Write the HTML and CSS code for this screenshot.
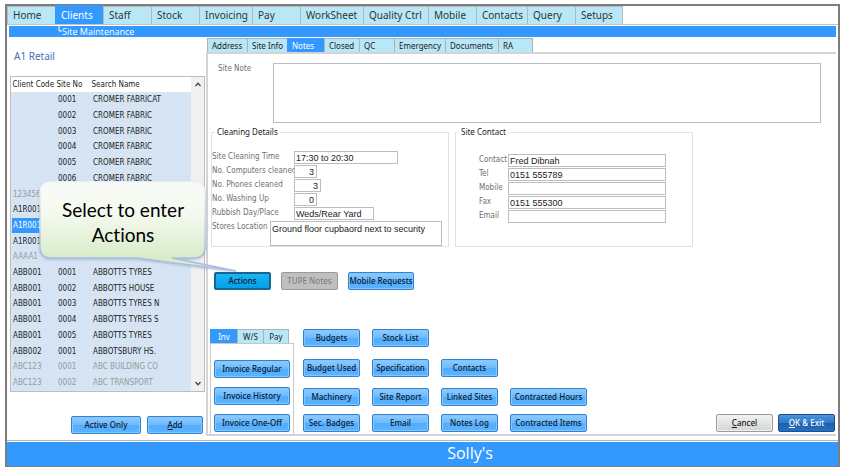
FILE: index.html
```html
<!DOCTYPE html>
<html lang="en">
<head>
    <meta charset="UTF-8">
    <meta name="viewport" content="width=device-width, initial-scale=1.0">
    <title>Site Maintenance</title>
    <link rel="stylesheet" href="styles.css">
</head>
<body>

    <div class="window">
        <nav class="main-nav">
            <a href="#" class="w48">Home</a>
            <a href="#" class="w48 active">Clients</a>
            <a href="#" class="w48">Staff</a>
            <a href="#" class="w48">Stock</a>
            <a href="#" class="w53">Invoicing</a>
            <a href="#" class="w48">Pay</a>
            <a href="#" class="w63">WorkSheet</a>
            <a href="#" class="w65">Quality Ctrl</a>
            <a href="#" class="w48">Mobile</a>
            <a href="#" class="w51">Contacts</a>
            <a href="#" class="w48">Query</a>
            <a href="#" class="w48">Setups</a>
        </nav>
        <div class="sub-nav">
            <a href="#"><svg width="4" height="6" viewBox="0 0 4 6"><path d="M1 0v5h3" fill="none" stroke="#fff"/></svg>Site Maintenance</a>
        </div>

        <div class="content">
            <aside class="clients">
                <h1>A1 Retail</h1>
                <div class="client-list">
                    <table>
                        <thead>
                            <tr><th class="code">Client Code</th><th class="site">Site No</th><th>Search Name</th></tr>
                        </thead>
                        <tbody>
                            <tr><td></td><td>0001</td><td>CROMER FABRICAT</td></tr>
                            <tr><td></td><td>0002</td><td>CROMER FABRIC</td></tr>
                            <tr><td></td><td>0003</td><td>CROMER FABRIC</td></tr>
                            <tr><td></td><td>0004</td><td>CROMER FABRIC</td></tr>
                            <tr><td></td><td>0005</td><td>CROMER FABRIC</td></tr>
                            <tr><td></td><td>0006</td><td>CROMER FABRIC</td></tr>
                            <tr class="closed"><td>1234567</td><td></td><td></td></tr>
                            <tr><td>A1R001</td><td></td><td></td></tr>
                            <tr class="selected"><td>A1R001</td><td></td><td></td></tr>
                            <tr><td>A1R001</td><td></td><td></td></tr>
                            <tr class="closed"><td>AAAA1</td><td></td><td></td></tr>
                            <tr><td>ABB001</td><td>0001</td><td>ABBOTTS TYRES</td></tr>
                            <tr><td>ABB001</td><td>0002</td><td>ABBOTTS HOUSE</td></tr>
                            <tr><td>ABB001</td><td>0003</td><td>ABBOTTS TYRES N</td></tr>
                            <tr><td>ABB001</td><td>0004</td><td>ABBOTTS TYRES S</td></tr>
                            <tr><td>ABB001</td><td>0005</td><td>ABBOTTS TYRES</td></tr>
                            <tr><td>ABB002</td><td>0001</td><td>ABBOTSBURY HS.</td></tr>
                            <tr class="closed"><td>ABC123</td><td>0001</td><td>ABC BUILDING CO</td></tr>
                            <tr class="closed"><td>ABC123</td><td>0002</td><td>ABC TRANSPORT</td></tr>
                        </tbody>
                    </table>
                    <div class="scrollbar">
                        <svg width="6" height="5" viewBox="0 0 6 5"><path d="M0.5 4L3 1.3L5.5 4" fill="none" stroke="#444" stroke-width="1.3"/></svg>
                        <svg width="6" height="5" viewBox="0 0 6 5"><path d="M0.5 1L3 3.7L5.5 1" fill="none" stroke="#444" stroke-width="1.3"/></svg>
                    </div>
                </div>
                <div class="client-actions">
                    <button type="button" class="btn active-only">Active Only</button>
                    <button type="button" class="btn"><u>A</u>dd</button>
                </div>
            </aside>

            <main>
                <div class="tabs">
                    <button type="button" class="w40">Address</button>
                    <button type="button" class="w40">Site Info</button>
                    <button type="button" class="w37 active">Notes</button>
                    <button type="button" class="w35">Closed</button>
                    <button type="button" class="w35">QC</button>
                    <button type="button" class="w51">Emergency</button>
                    <button type="button" class="w53">Documents</button>
                    <button type="button" class="w35">RA</button>
                </div>

                <div class="panel">
                    <div class="site-note">
                        <label for="siteNote">Site Note</label>
                        <textarea id="siteNote"></textarea>
                    </div>

                    <div class="groups">
                        <fieldset class="cleaning">
                            <legend>Cleaning Details</legend>
                            <div class="row">
                                <label for="cleaningTime">Site Cleaning Time</label>
                                <input type="text" id="cleaningTime" class="time" value="17:30 to 20:30">
                            </div>
                            <div class="row">
                                <label for="computers">No. Computers cleaned</label>
                                <input type="text" id="computers" class="number" value="3">
                            </div>
                            <div class="row">
                                <label for="phones">No. Phones cleaned</label>
                                <input type="text" id="phones" class="number wide" value="3">
                            </div>
                            <div class="row">
                                <label for="washing">No. Washing Up</label>
                                <input type="text" id="washing" class="number" value="0">
                            </div>
                            <div class="row">
                                <label for="rubbish">Rubbish Day/Place</label>
                                <input type="text" id="rubbish" class="place" value="Weds/Rear Yard">
                            </div>
                            <div class="row stores">
                                <label for="stores">Stores Location</label>
                                <textarea id="stores">Ground floor cupbaord next to security</textarea>
                            </div>
                        </fieldset>

                        <fieldset class="contact">
                            <legend>Site Contact</legend>
                            <div class="row">
                                <label for="contact">Contact</label>
                                <input type="text" id="contact" value="Fred Dibnah">
                            </div>
                            <div class="row">
                                <label for="tel">Tel</label>
                                <input type="text" id="tel" value="0151 555789">
                            </div>
                            <div class="row">
                                <label for="mobile">Mobile</label>
                                <input type="text" id="mobile">
                            </div>
                            <div class="row">
                                <label for="fax">Fax</label>
                                <input type="text" id="fax" value="0151 555300">
                            </div>
                            <div class="row">
                                <label for="email">Email</label>
                                <input type="text" id="email">
                            </div>
                        </fieldset>
                    </div>

                    <div class="note-actions">
                        <button type="button" class="btn focused">Actions</button>
                        <button type="button" class="btn" disabled>TUPE Notes</button>
                        <button type="button" class="btn requests">Mobile Requests</button>
                    </div>

                    <div class="bottom">
                        <div class="invoices">
                            <div class="tabs">
                                <button type="button" class="w27 active">Inv</button>
                                <button type="button" class="w26">W/S</button>
                                <button type="button" class="w26">Pay</button>
                            </div>
                            <div class="invoice-list">
                                <button type="button" class="btn">Invoice Regular</button>
                                <button type="button" class="btn">Invoice History</button>
                                <button type="button" class="btn">Invoice One-Off</button>
                            </div>
                        </div>
                        <div class="links">
                            <button type="button" class="btn">Budgets</button>
                            <button type="button" class="btn">Stock List</button>
                            <button type="button" class="btn new-row">Budget Used</button>
                            <button type="button" class="btn">Specification</button>
                            <button type="button" class="btn">Contacts</button>
                            <button type="button" class="btn new-row">Machinery</button>
                            <button type="button" class="btn">Site Report</button>
                            <button type="button" class="btn">Linked Sites</button>
                            <button type="button" class="btn">Contracted Hours</button>
                            <button type="button" class="btn">Sec. Badges</button>
                            <button type="button" class="btn">Email</button>
                            <button type="button" class="btn">Notes Log</button>
                            <button type="button" class="btn">Contracted Items</button>
                        </div>
                        <div class="confirm">
                            <button type="button" class="btn cancel"><u>C</u>ancel</button>
                            <button type="button" class="btn ok"><u>O</u>K &amp; Exit</button>
                        </div>
                    </div>
                </div>
            </main>
        </div>

        <footer>Solly's</footer>

        <div class="callout">
            <svg width="202" height="96" viewBox="0 0 202 96">
                <defs>
                    <linearGradient id="calloutFill" x1="0" y1="0" x2="0" y2="1">
                        <stop offset="0" stop-color="#f8fbf6"/>
                        <stop offset="0.35" stop-color="#f5faf0"/>
                        <stop offset="0.85" stop-color="#d9ecc9"/>
                    </linearGradient>
                    <linearGradient id="calloutEdge" x1="0" y1="0" x2="0" y2="1">
                        <stop offset="0" stop-color="#f2f6fa"/>
                        <stop offset="0.8" stop-color="#a9bee4"/>
                    </linearGradient>
                </defs>
                <path d="M12 1H155Q166 1 166 12V66Q166 77 155 77H133L197 90L98 77H12Q1 77 1 66V12Q1 1 12 1Z" fill="url(#calloutFill)" stroke="url(#calloutEdge)" stroke-width="1.5"/>
            </svg>
            <p>Select to enter Actions</p>
        </div>
    </div>

</body>
</html>
```

FILE: styles.css
```css
* {
    box-sizing: border-box;
}
body {
    margin: 0;
    padding: 4px 5px;
    min-height: 100vh;
    display: flex;
    background: white;
    font-family: "Noto Sans", sans-serif;
    font-size: 8px;
    color: #222;
}
button, input, textarea {
    margin: 0;
    font-family: inherit;
    font-size: inherit;
    color: inherit;
}
.window {
    position: relative;
    flex: 1;
    display: flex;
    flex-direction: column;
    border: 2px solid #7d7d7d;
    border-bottom-width: 1px;
}

/* top navigation */
.main-nav {
    display: flex;
    height: 19px;
    align-items: flex-end;
    border-bottom: 1px solid #c4c4c4;
    font-size: 10px;
}
.main-nav a {
    height: 18px;
    line-height: 17px;
    padding-left: 5px;
    border: 1px solid #b4b9bb;
    border-width: 1px 0 0 1px;
    background: #b8e8f8;
    color: #333;
    text-decoration: none;
    white-space: nowrap;
}
.main-nav a:last-child {
    border-right-width: 1px;
}
.main-nav a.active {
    height: 19px;
    line-height: 18px;
    background: #3399ff;
    border-color: #3399ff;
    color: white;
}
.w26 { width: 26px; }
.w27 { width: 27px; }
.w35 { width: 35px; }
.w37 { width: 37px; }
.w40 { width: 40px; }
.w48 { width: 48px; }
.w51 { width: 51px; }
.w53 { width: 53px; }
.w63 { width: 63px; }
.w65 { width: 65px; }
.sub-nav {
    margin: 1px 2px 0;
    padding-left: 49px;
    height: 11px;
    line-height: 11px;
    background: #3399ff;
    font-family: "Open Sans", sans-serif;
    font-size: 9px;
}
.sub-nav a {
    display: flex;
    color: white;
    text-decoration: none;
}

/* client list */
.content {
    flex: 1;
    display: flex;
    padding: 1px 2px 4px;
}
.clients {
    width: 197px;
    display: flex;
    flex-direction: column;
    padding: 0 1px;
}
h1 {
    margin: 9px 0 11px 4px;
    line-height: 18px;
    font-size: 10px;
    font-weight: normal;
    color: #4d6fb8;
}
.client-list {
    flex: 1;
    display: flex;
    border: 1px solid #bdbdbd;
}
table {
    flex: 1;
    height: 314px;
    table-layout: fixed;
    border-collapse: collapse;
    font-family: "DejaVu Sans Condensed", "DejaVu Sans", sans-serif;
}
th, td {
    height: 15px;
    padding: 1px 1px 0;
    line-height: 12px;
    text-align: left;
    font-weight: normal;
    white-space: nowrap;
}
td {
    background: #d5e4f4;
    border: 1px solid #dfe5ec;
}
td + td {
    padding-left: 2px;
}
.code {
    width: 44px;
}
.site {
    width: 35px;
}
.closed {
    color: #999;
}
.selected td:first-child {
    background: #3399ff;
    color: white;
}
.scrollbar {
    width: 13px;
    display: flex;
    flex-direction: column;
    justify-content: space-between;
    align-items: center;
    padding: 5px 0;
    background: #f0f0f0;
}
.client-actions {
    display: flex;
    justify-content: flex-end;
    gap: 6px;
    padding: 24px 2px 2px;
}
.client-actions .btn {
    width: 56px;
}
.client-actions .active-only {
    width: 70px;
}

/* buttons */
.btn {
    height: 18px;
    padding: 0;
    border: 1px solid #2f83d0;
    border-radius: 2px;
    background: linear-gradient(#8fcbff, #6bbaff 50%, #52adff 51%, #5cb3ff);
    box-shadow: inset 0 0 0 1px #86c6ff;
    font-weight: 500;
    line-height: 14px;
    color: #0c1a2c;
    white-space: nowrap;
}
.btn.focused {
    border: 2px solid #14688f;
    background: linear-gradient(#1fb2f5, #00a2ea);
    box-shadow: none;
}
.btn:disabled {
    border-color: #999;
    background: #bfbfbf;
    box-shadow: none;
    color: #808080;
}
.btn.cancel {
    border-color: #9a9a9a;
    background: linear-gradient(#f2f2f2, #d4d4d4);
    box-shadow: inset 0 0 0 1px #f0f0f0;
}
.btn.ok {
    border-color: #1c4f90;
    background: linear-gradient(#4a93dd, #2f78c8 50%, #1b5fae 51%, #2470c0);
    box-shadow: none;
    color: white;
}

/* notes panel */
main {
    flex: 1;
    min-width: 0;
    display: flex;
    flex-direction: column;
}
.tabs {
    display: flex;
    padding-left: 1px;
}
.tabs button {
    height: 14px;
    padding: 0 0 0 4px;
    border: 1px solid #a9b4b8;
    border-width: 1px 0 0 1px;
    background: #b8e8f8;
    line-height: 12px;
    text-align: left;
    white-space: nowrap;
}
.tabs button:last-child {
    border-right-width: 1px;
}
.tabs button.active {
    background: #3399ff;
    border-color: #3399ff;
    color: white;
}
.panel {
    flex: 1;
    display: flex;
    flex-direction: column;
    border: 2px solid #d4d4d4;
    border-right: none;
}
label {
    color: #707070;
    font-family: "DejaVu Sans Condensed", "DejaVu Sans", sans-serif;
    line-height: 12px;
    white-space: nowrap;
}
input, textarea {
    border: 1px solid #bcbcc4;
    border-radius: 0;
    background: white;
    font-family: "Liberation Sans", Arial, sans-serif;
    font-size: 9px;
    color: #222;
    resize: none;
}
.site-note {
    display: flex;
    padding: 9px 15px 0 10px;
}
.site-note label {
    width: 55px;
}
.site-note textarea {
    flex: 1;
    height: 60px;
}
.groups {
    display: flex;
    gap: 6px;
    padding: 4px 3px 0;
}
fieldset {
    width: 238px;
    height: 120px;
    margin: 0;
    padding: 14px 0 0;
    border: 1px solid #e2e2e2;
}
legend {
    margin-left: 3px;
    padding: 0 2px;
    line-height: 10px;
}
.row {
    display: flex;
    height: 14px;
}
.row input {
    height: 13px;
    padding: 0 1px;
}
.cleaning label {
    width: 82px;
}
.time {
    width: 104px;
}
.row .number {
    width: 23px;
    padding-right: 2px;
    text-align: right;
}
.row .wide {
    width: 27px;
}
.place {
    width: 80px;
}
.cleaning .stores label {
    width: 58px;
}
.stores textarea {
    width: 172px;
    height: 25px;
    padding: 2px 1px;
}
.contact {
    padding-top: 17px;
}
.contact .row {
    padding-left: 23px;
}
.contact label {
    width: 29px;
}
.contact input {
    width: 158px;
}
.note-actions {
    display: flex;
    padding: 25px 6px;
    gap: 10px;
}
.note-actions .btn {
    width: 57px;
}
.note-actions .requests {
    width: 66px;
}

/* invoice tabs and links */
.bottom {
    display: flex;
    flex: 1;
    align-items: flex-end;
    padding-left: 2px;
}
.invoices {
    width: 84px;
}
.invoices .tabs {
    padding: 0;
}
.invoices .tabs button {
    padding: 0;
    text-align: center;
}
.invoice-list {
    display: flex;
    flex-direction: column;
    gap: 9px;
    padding: 16px 3px 2px;
    border: 1px solid #c8c8c8;
    border-bottom: none;
}
.links {
    display: grid;
    grid-template-columns: 57px 57px 57px 77px;
    grid-template-rows: 30px 29px 26px 18px;
    align-items: start;
    column-gap: 12px;
    padding: 0 9px 2px;
}
.new-row {
    grid-column: 1;
}
.confirm {
    flex: 1;
    display: flex;
    justify-content: flex-end;
    gap: 5px;
    padding: 0 1px 2px 0;
}
.confirm .btn {
    width: 57px;
}

footer {
    height: 26px;
    border-top: 1px solid #b5b5b5;
    box-shadow: inset 0 1px white;
    background: #3399ff;
    color: white;
    font-family: "Open Sans", sans-serif;
    font-size: 16px;
    line-height: 24px;
    text-align: center;
    padding-left: 95px;
}

/* help bubble pointing at the Actions button */
.callout {
    position: absolute;
    left: 32px;
    top: 175px;
    width: 168px;
}
.callout svg {
    display: block;
    filter: drop-shadow(0 1px 1px rgba(80, 100, 140, 0.3));
}
.callout p {
    position: absolute;
    top: 16px;
    left: 0;
    width: 168px;
    margin: 0;
    padding: 0 20px;
    font-family: Lato, sans-serif;
    font-size: 19px;
    font-variant-ligatures: none;
    line-height: 25px;
    text-align: center;
    color: black;
}
```
